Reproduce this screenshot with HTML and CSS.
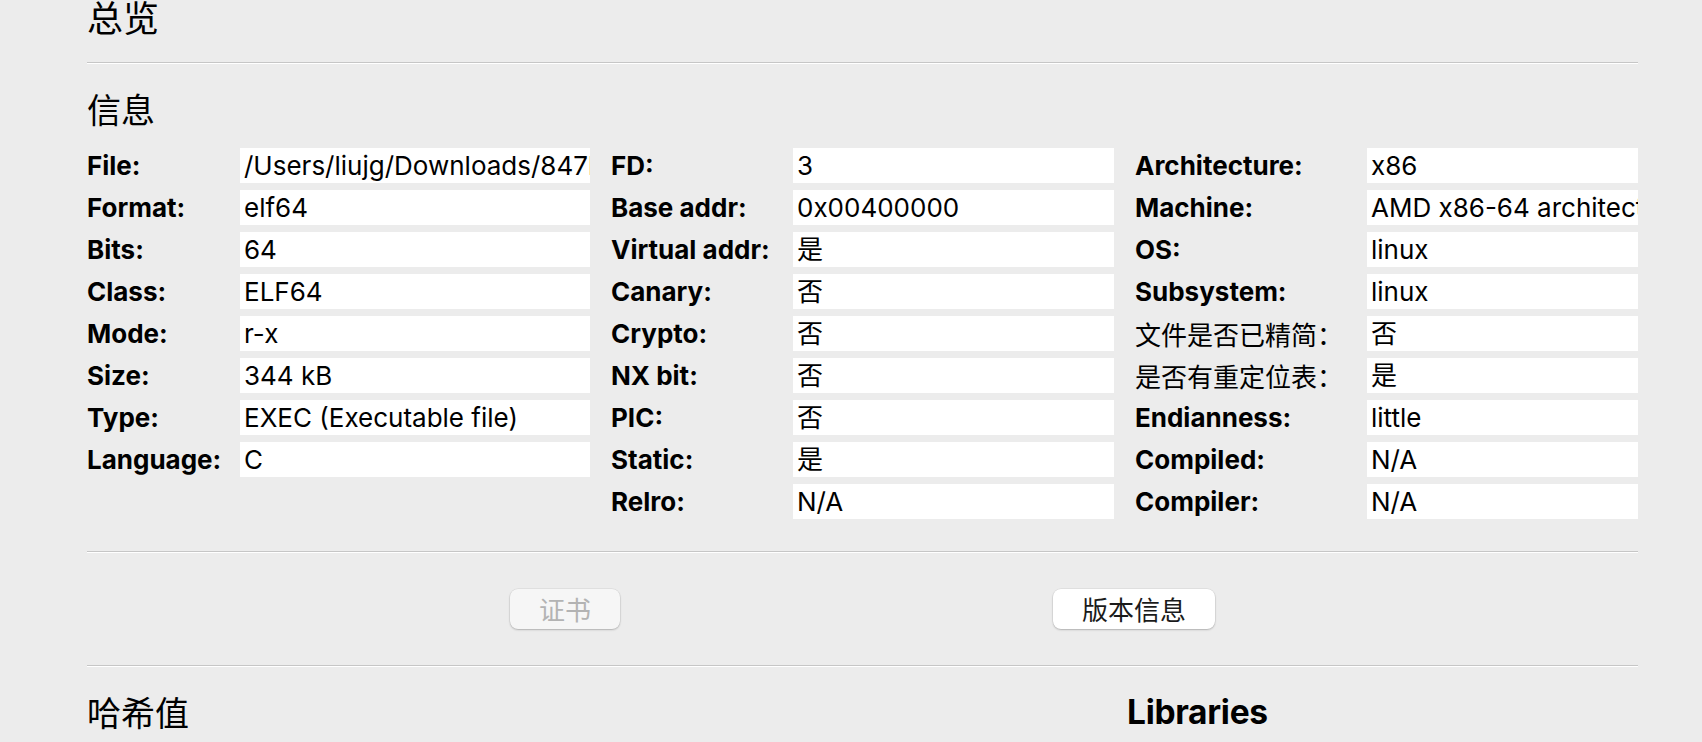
FILE: index.html
```html
<!DOCTYPE html>
<html lang="zh-CN">
<head>
<meta charset="utf-8">
<title>总览</title>
<link rel="stylesheet" href="styles.css">
</head>
<body>
<main class="page">
  <h1 class="page-title">总览</h1>
  <div class="sep"></div>

  <section class="info">
    <h2 class="section-title">信息</h2>
    <div class="info-grid">
      <div class="info-col col-a">
        <div class="label">File:</div><div class="value">/Users/liujg/Downloads/847b3c</div>
        <div class="label">Format:</div><div class="value">elf64</div>
        <div class="label">Bits:</div><div class="value">64</div>
        <div class="label">Class:</div><div class="value">ELF64</div>
        <div class="label">Mode:</div><div class="value">r-x</div>
        <div class="label">Size:</div><div class="value">344 kB</div>
        <div class="label">Type:</div><div class="value">EXEC (Executable file)</div>
        <div class="label">Language:</div><div class="value">C</div>
      </div>
      <div class="info-col col-b">
        <div class="label">FD:</div><div class="value">3</div>
        <div class="label">Base addr:</div><div class="value">0x00400000</div>
        <div class="label">Virtual addr:</div><div class="value">是</div>
        <div class="label">Canary:</div><div class="value">否</div>
        <div class="label">Crypto:</div><div class="value">否</div>
        <div class="label">NX bit:</div><div class="value">否</div>
        <div class="label">PIC:</div><div class="value">否</div>
        <div class="label">Static:</div><div class="value">是</div>
        <div class="label">Relro:</div><div class="value">N/A</div>
      </div>
      <div class="info-col col-c">
        <div class="label">Architecture:</div><div class="value">x86</div>
        <div class="label">Machine:</div><div class="value">AMD x86-64 architecture</div>
        <div class="label">OS:</div><div class="value">linux</div>
        <div class="label">Subsystem:</div><div class="value">linux</div>
        <div class="label label-cjk">文件是否已精简：</div><div class="value">否</div>
        <div class="label label-cjk">是否有重定位表：</div><div class="value">是</div>
        <div class="label">Endianness:</div><div class="value">little</div>
        <div class="label">Compiled:</div><div class="value">N/A</div>
        <div class="label">Compiler:</div><div class="value">N/A</div>
      </div>
    </div>
  </section>

  <div class="sep sep-after-info"></div>

  <div class="actions">
    <button class="btn btn-cert" disabled>证书</button>
    <button class="btn btn-version">版本信息</button>
  </div>

  <div class="sep"></div>

  <div class="bottom">
    <h2 class="section-title">哈希值</h2>
    <h2 class="libs-title">Libraries</h2>
  </div>
</main>
</body>
</html>
```

FILE: styles.css
```css
html, body {
  margin: 0;
  padding: 0;
  background: #ececec;
  overflow: hidden;
}

body {
  font-family: Inter, "Noto Sans CJK SC", sans-serif;
  color: #000;
}

.page {
  width: 1551px;
  margin-left: 87px;
}

.page-title {
  font-family: "Noto Sans CJK SC", sans-serif;
  font-weight: 400;
  font-size: 36px;
  line-height: 40px;
  margin: -4px 0 26px 0;
}

.sep {
  height: 1px;
  background: #c6c6c6;
  border-bottom: 1px solid #ffffff;
}

.section-title {
  font-family: "Noto Sans CJK SC", sans-serif;
  font-weight: 400;
  font-size: 34px;
  line-height: 40px;
  margin: 25px 0 0 0;
}

.info-grid {
  margin-top: 19px;
  display: grid;
  grid-template-columns: 1fr 1fr 1fr;
  column-gap: 21px;
  align-items: start;
}

.info-col {
  display: grid;
  row-gap: 7px;
  grid-auto-rows: 35px;
}

.col-a { grid-template-columns: 153px 1fr; }
.col-b { grid-template-columns: 182px 1fr; }
.col-c { grid-template-columns: 232px 1fr; }

.label {
  font-weight: 700;
  font-size: 26px;
  line-height: 35px;
  white-space: nowrap;
}

.label-cjk {
  font-family: "Noto Sans CJK SC", sans-serif;
  font-weight: 400;
  font-size: 26px;
}

.value {
  background: #ffffff;
  font-size: 26px;
  line-height: 35px;
  padding: 0 4px;
  white-space: nowrap;
  overflow: hidden;
  text-overflow: clip;
}

.sep-after-info {
  margin-top: 32px;
}

.actions {
  display: flex;
  justify-content: center;
  gap: 433px;
  padding: 36px 0 36px 0;
}

.btn {
  height: 40px;
  padding: 0 29px;
  border: none;
  border-radius: 8px;
  font-family: "Noto Sans CJK SC", sans-serif;
  font-size: 26px;
  line-height: 40px;
  box-shadow: 0 1px 2px rgba(0, 0, 0, 0.22), 0 0 0 0.5px rgba(0, 0, 0, 0.08);
}

.btn-cert {
  background: #f6f6f6;
  color: #b3b3b3;
}

.btn-version {
  background: #ffffff;
  color: #1a1a1a;
}

.bottom {
  display: grid;
  grid-template-columns: 1040px 1fr;
}

.libs-title {
  font-family: Inter, sans-serif;
  font-weight: 700;
  font-size: 33.5px;
  line-height: 40px;
  letter-spacing: -0.3px;
  margin: 25px 0 0 0;
}
```
